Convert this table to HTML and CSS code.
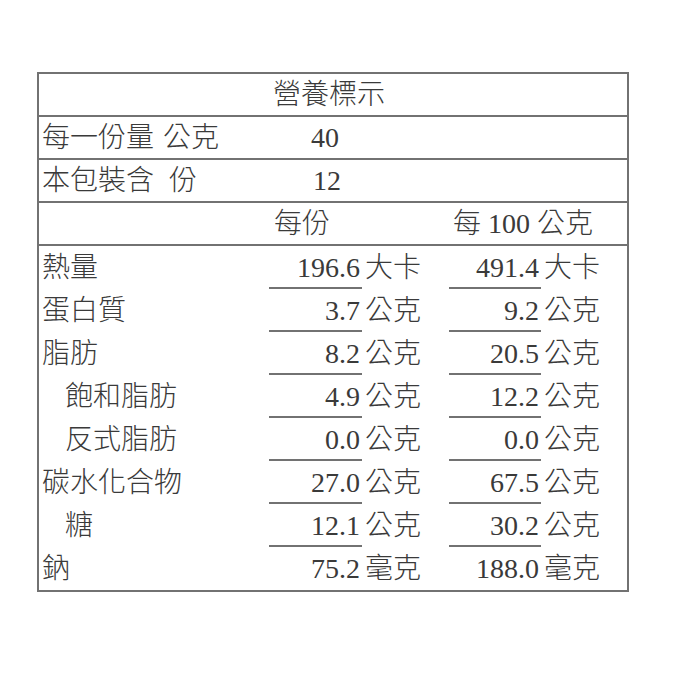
FILE: index.html
```html
<!DOCTYPE html>
<html lang="zh-Hant">
<head>
<meta charset="utf-8">
<title>營養標示</title>
<link rel="stylesheet" href="styles.css">
</head>
<body>
<div class="panel">
  <div class="row title">營養標示</div>
  <div class="row info"><span class="lbl">每一份量<span class="sp1"></span>公克</span><span class="amt">40</span></div>
  <div class="row info"><span class="lbl">本包裝含<span class="sp2"></span>份</span><span class="amt amt2">12</span></div>
  <div class="row head"><span></span><span class="h1">每份</span><span class="h2">每 100 公克</span></div>
  <div class="row data"><span class="lbl">熱量</span><span class="num">196.6</span><span class="unit">大卡</span><span class="num">491.4</span><span class="unit">大卡</span></div>
  <div class="row data"><span class="lbl">蛋白質</span><span class="num">3.7</span><span class="unit">公克</span><span class="num">9.2</span><span class="unit">公克</span></div>
  <div class="row data"><span class="lbl">脂肪</span><span class="num">8.2</span><span class="unit">公克</span><span class="num">20.5</span><span class="unit">公克</span></div>
  <div class="row data"><span class="lbl sub">飽和脂肪</span><span class="num">4.9</span><span class="unit">公克</span><span class="num">12.2</span><span class="unit">公克</span></div>
  <div class="row data"><span class="lbl sub">反式脂肪</span><span class="num">0.0</span><span class="unit">公克</span><span class="num">0.0</span><span class="unit">公克</span></div>
  <div class="row data"><span class="lbl">碳水化合物</span><span class="num">27.0</span><span class="unit">公克</span><span class="num">67.5</span><span class="unit">公克</span></div>
  <div class="row data"><span class="lbl sub">糖</span><span class="num">12.1</span><span class="unit">公克</span><span class="num">30.2</span><span class="unit">公克</span></div>
  <div class="row data last"><span class="lbl">鈉</span><span class="num">75.2</span><span class="unit">毫克</span><span class="num">188.0</span><span class="unit">毫克</span></div>
</div>
</body>
</html>
```

FILE: styles.css
```css
html, body {
  margin: 0;
  padding: 0;
  background: #ffffff;
}

body {
  padding: 72px 0 0 37px;
  font-family: "Liberation Serif", "Noto Sans CJK TC", serif;
  font-size: 28px;
  font-weight: 300;
  color: #3a3a3a;
}

.panel {
  box-sizing: border-box;
  width: 592px;
  border: 2px solid #727272;
}

.row {
  box-sizing: border-box;
  height: 43px;
  display: grid;
  grid-template-columns: 230px 93px 87px 92px 86px;
  line-height: 1;
}

.row > span {
  display: flex;
  align-items: center;
  box-sizing: border-box;
  height: 100%;
  white-space: nowrap;
}

.title,
.info,
.head {
  border-bottom: 2px solid #727272;
}

.title {
  display: flex;
  align-items: center;
  justify-content: center;
  padding-right: 8px;
}

.lbl {
  padding-left: 3px;
}

.lbl.sub {
  padding-left: 26px;
}

.sp1 {
  display: inline-block;
  width: 9px;
}

.sp2 {
  display: inline-block;
  width: 15px;
}

.info {
  grid-template-columns: 230px 1fr;
}

.amt {
  padding-left: 42px;
}

.amt2 {
  padding-left: 44px;
}

.h1 {
  grid-column: 2 / 4;
  padding-left: 5px;
}

.h2 {
  grid-column: 4 / 6;
  padding-left: 4px;
}

.num {
  justify-content: flex-end;
  padding-right: 2px;
  border-bottom: 2px solid #727272;
  padding-top: 2px;
}

.last .num {
  border-bottom: none;
  padding-top: 0;
}

.unit {
  padding-left: 3px;
}
```
